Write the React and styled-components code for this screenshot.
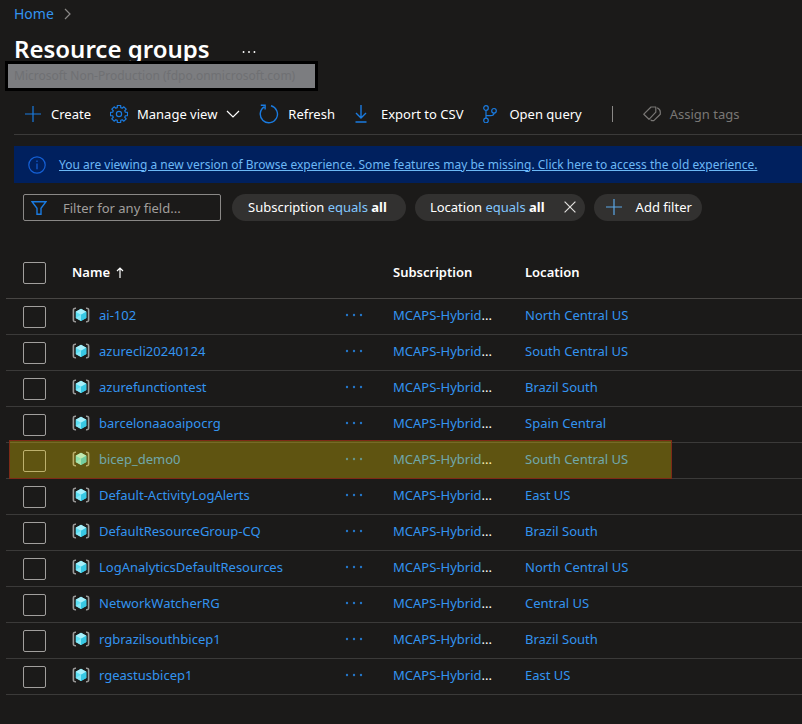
import React from "react";
import styled, { createGlobalStyle } from "styled-components";

const GlobalStyle = createGlobalStyle`
  * { box-sizing: border-box; }
  body {
    margin: 0;
    background: #1b1a19;
    color: #fff;
    font: 13px/20px "Noto Sans", "Open Sans", sans-serif;
  }
  button, input { font: inherit; color: inherit; }
  button { background: none; border: 0; padding: 0; cursor: pointer; }
`;

const Page = styled.main`
  min-height: 100vh;
  padding: 4px 0 27px;
`;

const Breadcrumb = styled.nav`
  display: flex;
  align-items: center;
  gap: 10px;
  padding-left: 14px;
  font-size: 14px;
`;

const Link = styled.a`
  color: #3394f0;
  text-decoration: none;
`;

const TitleRow = styled.header`
  display: flex;
  align-items: center;
  gap: 32px;
  margin-top: 9px;
  padding-left: 14px;
`;

const Title = styled.h1`
  margin: 0;
  font-size: 24px;
  line-height: 32px;
  font-weight: 600;
`;

const Masked = styled.p`
  position: relative;
  width: fit-content;
  margin: -4px 0 0 5px;
  padding: 0 20px 0 6px;
  border: 3px solid #000;
  background: #7c7d80;
  color: #6f7073;
  font-size: 12px;
  line-height: 24px;
`;

const Toolbar = styled.div`
  display: flex;
  align-items: center;
  gap: 19px;
  margin: 9px 0 0 14px;
  padding: 0 0 6px 10px;
  border-bottom: 1px solid #3b3a39;
`;

const Command = styled.button`
  display: flex;
  align-items: center;
  gap: 9px;
  height: 28px;
  white-space: nowrap;
  color: #fff;
  &:disabled { color: #797775; cursor: default; }
`;

const Divider = styled.span`
  width: 1px;
  height: 16px;
  margin: 0 11px;
  background: #8a8886;
`;

const Banner = styled.div`
  display: flex;
  align-items: center;
  gap: 13px;
  height: 37px;
  margin: 11px 0 0 14px;
  padding-left: 14px;
  background: #00205e;
  white-space: nowrap;
`;

const BannerLink = styled.a`
  color: #6cb8f6;
  font-size: 12px;
`;

const Filters = styled.div`
  display: flex;
  gap: 9px;
  margin: 11px 0 0 23px;
`;

const SearchBox = styled.label`
  display: flex;
  align-items: center;
  gap: 16px;
  width: 198px;
  height: 27px;
  margin-right: 2px;
  padding-left: 7px;
  border: 1px solid #8a8886;
  border-radius: 2px;
`;

const SearchInput = styled.input`
  flex: 1;
  min-width: 0;
  padding: 0;
  border: 0;
  outline: 0;
  background: none;
  &::placeholder { color: #a19f9d; opacity: 1; }
`;

const Pill = styled.button`
  display: flex;
  align-items: center;
  gap: ${(p) => p.$gap || 0}px;
  height: 27px;
  padding: 0 ${(p) => p.$end || 19}px 1px ${(p) => p.$start || 16}px;
  border-radius: 14px;
  background: #323130;
  white-space: nowrap;
`;

const Operator = styled.span`
  color: #82c7ff;
`;

const Table = styled.table`
  width: calc(100% - 6px);
  margin: 27px 0 0 6px;
  table-layout: fixed;
  border-spacing: 0;
`;

const Column = styled.col`
  width: ${(p) => p.$width};
`;

const HeadCell = styled.th`
  height: 51px;
  padding: 0 0 2px;
  border-bottom: 1px solid #484644;
  text-align: left;
  font-weight: 600;
`;

const Row = styled.tr`
  position: relative;
`;

const Cell = styled.td`
  height: 36px;
  padding: 0 0 4px;
  border-bottom: 1px solid #3b3a39;
  white-space: nowrap;
`;

const CheckCell = styled(Cell)`
  padding: 0 0 0 17px;
`;

const CheckHead = styled(HeadCell)`
  padding: 0 0 0 17px;
`;

const Checkbox = styled.input`
  appearance: none;
  display: block;
  width: 23px;
  height: 22px;
  margin: 0;
  border: 1px solid #a19f9d;
  border-radius: 2px;
  &:checked { background: #2899f5; }
`;

const NameGroup = styled.div`
  display: flex;
  align-items: center;
  gap: 9px;
  padding-right: 30px;
`;

const MoreButton = styled.button`
  display: flex;
  margin-left: auto;
  color: #2476c8;
`;

const Highlight = styled.span`
  position: absolute;
  inset: -3px 130px 0 3px;
  border: 1px solid #7d2a17;
  background: rgba(255, 218, 0, 0.3);
  background-clip: padding-box;
  pointer-events: none;
`;

const Svg = ({ w = 18, h = 18, box, color = "#1a7be0", children }) => (
  <svg width={w} height={h} viewBox={box || `0 0 ${w} ${h}`} fill="none" stroke={color} strokeWidth="1.2" aria-hidden="true">
    {children}
  </svg>
);

const PlusIcon = ({ color }) => (
  <Svg color={color}><path d="M9 1v16M1 9h16" /></Svg>
);

const gearPath = (() => {
  const points = [];
  const teeth = 8;
  for (let i = 0; i < teeth; i += 1) {
    [[-0.27, 6.6], [-0.19, 8.7], [0.19, 8.7], [0.27, 6.6]].forEach(([offset, radius]) => {
      const angle = (i * 2 * Math.PI) / teeth + offset;
      points.push(`${(9 + radius * Math.sin(angle)).toFixed(2)} ${(9 - radius * Math.cos(angle)).toFixed(2)}`);
    });
  }
  return `M${points.join("L")}Z`;
})();

const GearIcon = () => (
  <Svg><path d={gearPath} strokeLinejoin="round" /><circle cx="9" cy="9" r="2.6" /></Svg>
);

const ChevronDown = () => (
  <Svg w={14} h={10} color="#fff"><path d="M1 2l6 6 6-6" /></Svg>
);

const RefreshIcon = () => (
  <Svg w={20} h={20}><path d="M12 1.8A8.6 8.6 0 1 1 5.2 2.9M1.8 1.2h4.3v4.3" strokeWidth="1.4" /></Svg>
);

const DownloadIcon = () => (
  <Svg><path d="M7 0v13M2 8l5 5 5-5M1.5 17h11" strokeWidth="1.4" /></Svg>
);

const BranchIcon = () => (
  <Svg>
    <circle cx="4" cy="3" r="2.3" />
    <circle cx="4" cy="15.5" r="2.3" />
    <circle cx="12" cy="5.8" r="2.3" />
    <path d="M4 5.3v7.9M4 10.7h4.5q3.5 0 3.5-2.6" />
  </Svg>
);

const TagIcon = () => (
  <Svg color="#797775">
    <path d="M.8 9.2L8 2H12.8V7.2L6 14.3ZM14.2 2.8C16.5 4 17.3 5 17.3 7V9.2L10.8 15.6H8.6L7.6 14.6" strokeLinejoin="round" />
  </Svg>
);

const InfoIcon = () => (
  <Svg color="#1460d6"><circle cx="9" cy="9" r="8.2" /><path d="M9 7.5v5.8M9 4.6v1.5" /></Svg>
);

const FunnelIcon = () => (
  <Svg w={16} h={16}><path d="M1 1.7h14L10 8.2v6.1H6V8.2Z" strokeWidth="1.4" /></Svg>
);

const CloseIcon = () => (
  <Svg w={12} h={12} color="#e1dfdd"><path d="M.6.6l10.8 10.8M11.4.6L.6 11.4" /></Svg>
);

const SortArrow = styled.svg`
  margin-left: 6px;
  vertical-align: -1px;
`;

const Dots = ({ w = 18, color = "currentColor" }) => (
  <Svg w={w} h={4} box="0 0 18 4" color="none">
    <g fill={color}><circle cx="2" cy="2" r="1.2" /><circle cx="9" cy="2" r="1.2" /><circle cx="16" cy="2" r="1.2" /></g>
  </Svg>
);

const ResourceGroupIcon = () => (
  <Svg w={18} h={16} color="#9b9a99">
    <path d="M4 1.3Q1.4 1 1.4 3V13Q1.4 15 4 14.7M14 1.3Q16.6 1 16.6 3V13Q16.6 15 14 14.7" strokeWidth="1.6" />
    <g stroke="none">
      <path d="M9 1.7l5.3 3v6.2L9 14 3.7 10.9V4.7Z" fill="#5cdff3" />
      <path d="M9 1.7l5.3 3L9 7.8 3.7 4.7Z" fill="#a8f0fb" />
      <path d="M9 7.8l5.3-3.1v6.2L9 14Z" fill="#38c8e4" />
      <path d="M9 7.8L3.7 10.9 9 14Z" fill="#86e8f7" />
    </g>
  </Svg>
);

const groups = [
  ["ai-102", "North Central US"],
  ["azurecli20240124", "South Central US"],
  ["azurefunctiontest", "Brazil South"],
  ["barcelonaaoaipocrg", "Spain Central"],
  ["bicep_demo0", "South Central US"],
  ["Default-ActivityLogAlerts", "East US"],
  ["DefaultResourceGroup-CQ", "Brazil South"],
  ["LogAnalyticsDefaultResources", "North Central US"],
  ["NetworkWatcherRG", "Central US"],
  ["rgbrazilsouthbicep1", "Brazil South"],
  ["rgeastusbicep1", "East US"],
];

export default function App() {
  return (
    <Page>
      <GlobalStyle />
      <Breadcrumb aria-label="Breadcrumb">
        <Link href="#home">Home</Link>
        <Svg w={8} h={12} color="#8a8886"><path d="M1 1l5 5-5 5" /></Svg>
      </Breadcrumb>
      <TitleRow>
        <Title>Resource groups</Title>
        <button type="button" aria-label="More options"><Dots w={14} color="#fff" /></button>
      </TitleRow>
      <Masked>Microsoft Non-Production (fdpo.onmicrosoft.com)</Masked>

      <Toolbar role="toolbar">
        <Command><PlusIcon />Create</Command>
        <Command><GearIcon />Manage view<ChevronDown /></Command>
        <Command><RefreshIcon />Refresh</Command>
        <Command><DownloadIcon />Export to CSV</Command>
        <Command><BranchIcon />Open query</Command>
        <Divider />
        <Command disabled><TagIcon />Assign tags</Command>
      </Toolbar>

      <Banner>
        <InfoIcon />
        <BannerLink href="#classic">
          You are viewing a new version of Browse experience. Some features may be missing. Click here to access the old experience.
        </BannerLink>
      </Banner>

      <Filters>
        <SearchBox>
          <FunnelIcon />
          <SearchInput type="text" placeholder="Filter for any field..." aria-label="Filter for any field" />
        </SearchBox>
        <Pill><span>Subscription <Operator>equals</Operator> <b>all</b></span></Pill>
        <Pill $gap={19} $start={15} $end={9}><span>Location <Operator>equals</Operator> <b>all</b></span><CloseIcon /></Pill>
        <Pill $gap={13} $start={11} $end={10}><PlusIcon color="#5ba7e6" />Add filter</Pill>
      </Filters>

      <Table>
        <colgroup>
          <Column $width="66px" />
          <Column $width="321px" />
          <Column $width="132px" />
          <Column $width="auto" />
        </colgroup>
        <thead>
          <tr>
            <CheckHead><Checkbox type="checkbox" aria-label="Select all" /></CheckHead>
            <HeadCell aria-sort="ascending">
              Name
              <SortArrow width="8" height="11" viewBox="0 0 8 11" fill="none" stroke="#fff" strokeWidth="1.2" aria-hidden="true">
                <path d="M4 11V1M1 4l3-3 3 3" />
              </SortArrow>
            </HeadCell>
            <HeadCell>Subscription</HeadCell>
            <HeadCell>Location</HeadCell>
          </tr>
        </thead>
        <tbody>
          {groups.map(([name, location]) => (
            <Row key={name}>
              <CheckCell><Checkbox type="checkbox" aria-label={`Select ${name}`} /></CheckCell>
              <Cell>
                <NameGroup>
                  <ResourceGroupIcon />
                  <Link href={`#${name}`}>{name}</Link>
                  <MoreButton type="button" aria-label={`Actions for ${name}`}><Dots /></MoreButton>
                </NameGroup>
              </Cell>
              <Cell><Link href="#subscription">MCAPS-Hybrid</Link>...</Cell>
              <Cell>
                <Link href={`#${name}-location`}>{location}</Link>
                {name === "bicep_demo0" && <Highlight />}
              </Cell>
            </Row>
          ))}
        </tbody>
      </Table>
    </Page>
  );
}
